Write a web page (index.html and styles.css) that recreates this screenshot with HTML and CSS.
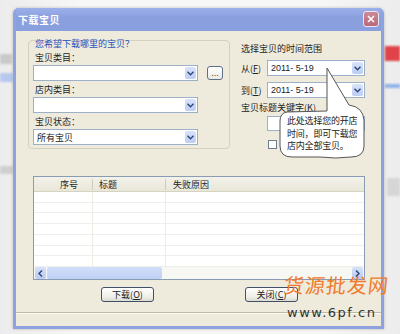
FILE: index.html
```html
<!DOCTYPE html>
<html lang="zh-CN">
<head>
  <meta charset="UTF-8" />
  <title>下载宝贝</title>
  <link rel="stylesheet" href="styles.css">
</head>
<body>
  <div class="desk">
    <!-- blurred stuff behind the dialog -->
    <div class="bit bit-l1"></div>
    <div class="bit bit-l2"></div>
    <div class="bit bit-l3"></div>
    <div class="bit bit-r1"></div>
    <div class="bit bit-r2"></div>
    <div class="bit bit-r3"></div>

    <div class="window">
      <div class="titlebar">
        <span class="title">下载宝贝</span>
        <span class="close">
          <svg width="8" height="8" viewBox="0 0 8 8"><path d="M1 1L7 7M7 1L1 7" stroke="#fff" stroke-width="1.6"/></svg>
        </span>
      </div>

      <div class="client">
        <div class="top">
          <div class="group">
            <div class="legend">您希望下载哪里的宝贝？</div>
            <div class="label">宝贝类目：</div>
            <div class="row">
              <div class="combo wide"><span class="arrow"><svg width="7" height="5" viewBox="0 0 7 5"><path d="M0.5 0.8L3.5 3.8L6.5 0.8" fill="none" stroke="#34487a" stroke-width="1.5"/></svg></span></div>
              <button class="dots">...</button>
            </div>
            <div class="label">店内类目：</div>
            <div class="combo wide"><span class="arrow"><svg width="7" height="5" viewBox="0 0 7 5"><path d="M0.5 0.8L3.5 3.8L6.5 0.8" fill="none" stroke="#34487a" stroke-width="1.5"/></svg></span></div>
            <div class="label">宝贝状态：</div>
            <div class="combo wide"><span class="value">所有宝贝</span><span class="arrow"><svg width="7" height="5" viewBox="0 0 7 5"><path d="M0.5 0.8L3.5 3.8L6.5 0.8" fill="none" stroke="#34487a" stroke-width="1.5"/></svg></span></div>
          </div>

          <div class="range">
            <div class="label">选择宝贝的时间范围</div>
            <div class="date-row">
              <span class="key">从(<u>F</u>)</span>
              <div class="combo date"><span class="value num">2011- 5-19</span><span class="arrow"><svg width="7" height="5" viewBox="0 0 7 5"><path d="M0.5 0.8L3.5 3.8L6.5 0.8" fill="none" stroke="#34487a" stroke-width="1.5"/></svg></span></div>
            </div>
            <div class="date-row">
              <span class="key">到(<u>T</u>)</span>
              <div class="combo date"><span class="value num">2011- 5-19</span><span class="arrow"><svg width="7" height="5" viewBox="0 0 7 5"><path d="M0.5 0.8L3.5 3.8L6.5 0.8" fill="none" stroke="#34487a" stroke-width="1.5"/></svg></span></div>
            </div>
            <div class="label kw">宝贝标题关键字(<u>K</u>)</div>
            <div class="textbox"></div>
            <div class="check"></div>
          </div>
        </div>

        <div class="list">
          <div class="list-head">
            <div class="c1">序号</div>
            <div class="c2">标题</div>
            <div class="c3">失败原因</div>
          </div>
          <div class="list-body">
            <div class="lrow"><div class="c1"></div><div class="c2"></div><div class="c3"></div></div>
            <div class="lrow"><div class="c1"></div><div class="c2"></div><div class="c3"></div></div>
            <div class="lrow"><div class="c1"></div><div class="c2"></div><div class="c3"></div></div>
            <div class="lrow"><div class="c1"></div><div class="c2"></div><div class="c3"></div></div>
            <div class="lrow"><div class="c1"></div><div class="c2"></div><div class="c3"></div></div>
            <div class="lrow"><div class="c1"></div><div class="c2"></div><div class="c3"></div></div>
            <div class="lrow"><div class="c1"></div><div class="c2"></div><div class="c3"></div></div>
          </div>
          <div class="hscroll">
            <span class="sbtn"><svg width="5" height="7" viewBox="0 0 5 7"><path d="M4 0.5L1 3.5L4 6.5" fill="none" stroke="#34487a" stroke-width="1.5"/></svg></span>
            <span class="thumb"></span>
            <span class="track"></span>
            <span class="sbtn"><svg width="5" height="7" viewBox="0 0 5 7"><path d="M1 0.5L4 3.5L1 6.5" fill="none" stroke="#34487a" stroke-width="1.5"/></svg></span>
          </div>
        </div>

        <div class="buttons">
          <button class="btn">下载(<u>O</u>)</button>
          <button class="btn">关闭(<u>C</u>)</button>
        </div>

        <div class="status"></div>
      </div>
    </div>

    <!-- tip bubble pointing at the date box -->
    <svg class="bubble" width="92" height="98" viewBox="276 64 92 98">
      <path d="M287 112 L327 111 L327 68 L349 105 Q363 107 364 120 L364 146 Q364 157 351 157 Q336 159 320 157 L292 157 Q280 157 280 146 L280 121 Q280 113 287 112 Z" fill="#fff" stroke="#555" stroke-width="1"/>
    </svg>
    <div class="tip">此处选择您的开店<br>时间，即可下载您<br>店内全部宝贝。</div>

    <div class="mark">货源批发网</div>
    <div class="mark-url">www.6pf.cn</div>
  </div>
</body>
</html>
```

FILE: styles.css
```css
body {
  margin: 0;
  padding: 0;
  background: #f3f3f3;
  font-family: "Noto Sans CJK SC", sans-serif;
  font-size: 9px;
  line-height: 11px;
  color: #222;
}

.desk {
  position: relative;
  width: 400px;
  height: 334px;
  overflow: hidden;
  background: linear-gradient(to right, #ececec, #f7f7f7 20%, #f7f7f7 80%, #ececec);
}

.bit {
  position: absolute;
  filter: blur(1px);
}

.bit-l1 { left: 0; top: 54px; width: 12px; height: 10px; background: #c9c9c9; }
.bit-l2 { left: 0; top: 73px; width: 13px; height: 9px; background: #b5c8ee; }
.bit-l3 { left: 0; top: 166px; width: 13px; height: 8px; background: #cfcfcf; }
.bit-r1 { left: 385px; top: 46px; width: 15px; height: 15px; background: #e0434a; }
.bit-r2 { left: 385px; top: 84px; width: 15px; height: 4px; background: #8fb1ea; }
.bit-r3 { left: 387px; top: 178px; width: 13px; height: 18px; background: #d6d6d6; }

/* dialog */
.window {
  position: absolute;
  left: 13px;
  top: 8px;
  width: 365px;
  height: 318px;
  padding: 0 3px 3px;
  background: #8ea2e0;
  border-radius: 6px 6px 0 0;
  box-shadow: 0 0 3px rgba(0, 0, 0, 0.25);
  display: flex;
  flex-direction: column;
}

.titlebar {
  height: 23px;
  flex: none;
  display: flex;
  align-items: center;
  justify-content: space-between;
  padding: 0 2px 0 2px;
  background: linear-gradient(to bottom, #9cb0ea, #8aa0de 40%, #8aa0de);
}

.title {
  color: #fff;
  font-size: 10px;
  font-weight: bold;
  letter-spacing: 0.5px;
}

.close {
  width: 14px;
  height: 14px;
  margin-top: -1px;
  border: 1px solid #e8e8f4;
  border-radius: 3px;
  background: linear-gradient(to bottom, #cc8a96, #b9697a);
  display: flex;
  align-items: center;
  justify-content: center;
}

.client {
  flex: 1;
  background: #eeebdd;
  display: flex;
  flex-direction: column;
  padding-top: 9px;
}

.top {
  display: flex;
  align-items: flex-start;
}

.group {
  margin-left: 12px;
  width: 194px;
  padding: 0 2px 3px 4px;
  border: 1px solid #d4d0bf;
  border-radius: 4px;
}

.group .legend {
  margin-top: -3px;
  padding-left: 2px;
  color: #2a52be;
}

.label {
  margin-top: 3px;
  padding-left: 2px;
}

.combo {
  position: relative;
  height: 16px;
  margin-top: 2px;
  box-sizing: border-box;
  background: #fff;
  border: 1px solid #9db0c8;
  display: flex;
  align-items: center;
}

.combo.wide {
  width: 165px;
}

.combo .value {
  padding-left: 3px;
}

.combo .num {
  font-family: "Liberation Sans", sans-serif;
  font-size: 9px;
  white-space: pre;
}

.arrow {
  position: absolute;
  right: 1px;
  top: 1px;
  bottom: 1px;
  width: 11px;
  border-radius: 2px;
  background: linear-gradient(to bottom, #d9e4fb, #bccdf4);
  display: flex;
  align-items: center;
  justify-content: center;
}

.row {
  display: flex;
  align-items: center;
  gap: 9px;
}

.row .combo {
  margin-top: 2px;
}

.dots {
  width: 16px;
  height: 14px;
  margin-top: 2px;
  padding: 0;
  border: 1px solid #5e6f88;
  border-radius: 3px;
  background: linear-gradient(to bottom, #ffffff, #ecebe3);
  font-family: "Liberation Sans", sans-serif;
  font-size: 9px;
  line-height: 8px;
  color: #333;
}

.range {
  margin-left: 11px;
  width: 124px;
}

.range > .label:first-child {
  margin-top: 3px;
  padding-left: 0;
}

.date-row {
  display: flex;
  align-items: center;
  margin-top: 6px;
}

.date-row .key {
  width: 26px;
}

.combo.date {
  width: 98px;
  margin-top: 0;
}

.range .kw {
  margin-top: 5px;
  padding-left: 0;
  height: 9px;
  line-height: 9px;
}

.textbox {
  margin: 4px 0 0 26px;
  width: 98px;
  height: 15px;
  box-sizing: border-box;
  background: #fff;
  border: 1px solid #9db0c8;
}

.check {
  margin: 9px 0 0 27px;
  width: 9px;
  height: 9px;
  box-sizing: border-box;
  background: #fff;
  border: 1px solid #6f7d8f;
}

/* result list */
.list {
  margin: 27px 0 0 17px;
  width: 332px;
  height: 104px;
  box-sizing: border-box;
  border: 1px solid #8a9cb3;
  background: #fff;
  display: flex;
  flex-direction: column;
}

.list-head {
  height: 15px;
  flex: none;
  box-sizing: border-box;
  display: flex;
  align-items: center;
  background: linear-gradient(to bottom, #f3f2ea, #e9e7d9);
  border-bottom: 1px solid #d6d3c2;
}

.c1 { width: 59px; flex: none; box-sizing: border-box; }
.c2 { width: 73px; flex: none; box-sizing: border-box; }
.c3 { flex: 1; }

.list-head .c1 {
  text-align: right;
  padding-right: 14px;
  border-right: 1px solid #cfcbba;
}

.list-head .c2 {
  padding-left: 6px;
  border-right: 1px solid #cfcbba;
}

.list-head .c3 {
  padding-left: 7px;
}

.list-body {
  flex: 1;
  display: flex;
  flex-direction: column;
}

.lrow {
  flex: 1;
  display: flex;
  border-bottom: 1px solid #efefe9;
}

.lrow .c1,
.lrow .c2 {
  border-right: 1px solid #ecebe4;
}

.hscroll {
  height: 12px;
  flex: none;
  display: flex;
  padding: 0 1px;
  background: #f7f7f4;
}

.sbtn {
  width: 11px;
  flex: none;
  border-radius: 2px;
  background: linear-gradient(to bottom, #d6e1fa, #b9cbf2);
  display: flex;
  align-items: center;
  justify-content: center;
}

.thumb {
  width: 115px;
  margin-left: 1px;
  border-radius: 2px;
  background: linear-gradient(to bottom, #d2defa, #bfd0f5);
}

.track {
  flex: 1;
}

/* buttons */
.buttons {
  display: flex;
  gap: 91px;
  margin: 7px 0 0 85px;
}

.btn {
  width: 53px;
  height: 15px;
  padding: 0;
  border: 1px solid #3f5068;
  border-radius: 3px;
  background: linear-gradient(to bottom, #ffffff, #efeee6 70%, #dcdad0);
  font-family: "Noto Sans CJK SC", sans-serif;
  font-size: 9px;
  line-height: 11px;
  color: #222;
}

.status {
  flex: 1;
  margin-top: 10px;
  border-top: 1px solid #bdb9a6;
  box-shadow: inset 0 1px 0 #fbfaf4;
}

/* tip */
.bubble {
  position: absolute;
  left: 276px;
  top: 64px;
}

.tip {
  position: absolute;
  left: 287px;
  top: 115px;
  font-size: 9px;
  line-height: 12.5px;
  color: #222;
  letter-spacing: -0.2px;
}

/* watermark */
.mark {
  position: absolute;
  left: 284px;
  top: 272px;
  font-size: 20px;
  line-height: 26px;
  color: #f27a2c;
  letter-spacing: 1px;
  transform: skewX(-6deg);
}

.mark-url {
  position: absolute;
  left: 287px;
  top: 304px;
  font-family: "DejaVu Sans", sans-serif;
  font-size: 13px;
  line-height: 17px;
  color: #333;
  letter-spacing: 1.5px;
}
```
